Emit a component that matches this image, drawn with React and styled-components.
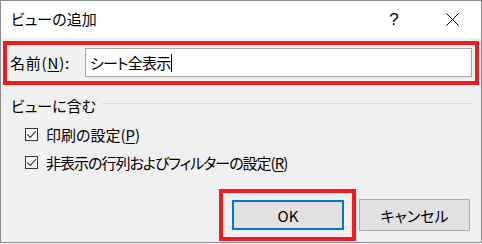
import React from "react";
import styled, { createGlobalStyle } from "styled-components";

const Global = createGlobalStyle`
  html, body {
    margin: 0;
    padding: 0;
    background: #fff;
  }
  body {
    font-family: "Noto Sans CJK JP", "Noto Sans", sans-serif;
    font-feature-settings: "palt";
    color: #000;
  }
`;

const Window = styled.div`
  box-sizing: border-box;
  width: 482px;
  height: 243px;
  border: 1px solid #8c8c8c;
  background: #f0f0f0;
  display: flex;
  flex-direction: column;
`;

const TitleBar = styled.div`
  height: 37px;
  background: #fff;
  display: flex;
  align-items: center;
  padding-left: 10px;
  font-size: 15px;
`;

const Title = styled.div`
  flex: 1;
  padding-bottom: 2px;
`;

const TitleButton = styled.div`
  width: 58px;
  height: 37px;
  display: flex;
  align-items: center;
  justify-content: center;
  font-family: "Liberation Sans", sans-serif;
  font-size: 17px;
`;

const Highlight = styled.div`
  box-sizing: border-box;
  border: 4px solid #ed1c24;
  display: flex;
  align-items: center;
`;

const NameBox = styled(Highlight)`
  margin: 3px 0 0 2px;
  width: 476px;
  height: 44px;
  padding: 0 3px 0 3px;
`;

const Label = styled.div`
  font-size: 15px;
  width: 75px;
  padding-bottom: 1px;
  white-space: nowrap;
  letter-spacing: 0.8px;
`;

const Key = styled.span`
  text-decoration: underline;
  text-underline-offset: 2px;
`;

const TextField = styled.div`
  box-sizing: border-box;
  width: 387px;
  height: 29px;
  margin-top: -1px;
  background: #fff;
  border: 1px solid #a5a5a5;
  display: flex;
  align-items: center;
  padding-left: 4px;
  font-size: 15px;
  letter-spacing: -0.8px;
`;

const Caret = styled.span`
  display: inline-block;
  width: 1px;
  height: 18px;
  background: #000;
  margin-left: 1px;
`;

const GroupHeader = styled.div`
  display: flex;
  align-items: center;
  margin: 10px 9px 0 10px;
  height: 20px;
  font-size: 15px;
`;

const GroupLine = styled.div`
  flex: 1;
  height: 1px;
  background: #dcdcdc;
  margin: 0 0 3px 6px;
`;

const CheckRow = styled.div`
  display: flex;
  align-items: center;
  height: 20px;
  margin: ${(p) => p.$top}px 0 0 24px;
  font-size: 15px;
  letter-spacing: ${(p) => p.$tight || 0}px;
`;

const Box = styled.div`
  box-sizing: border-box;
  width: 13px;
  height: 13px;
  border: 1px solid #333;
  background: #fff;
  margin-right: 8px;
  display: flex;
  align-items: center;
  justify-content: center;
`;

const ButtonRow = styled.div`
  display: flex;
  align-items: center;
  margin: 17px 11px 0 0;
  justify-content: flex-end;
  gap: 3px;
`;

const ButtonBox = styled(Highlight)`
  width: 137px;
  height: 52px;
  padding: 0 8px 0 9px;
`;

const Button = styled.div`
  box-sizing: border-box;
  width: ${(p) => p.$w}px;
  height: ${(p) => p.$h}px;
  background: #e1e1e1;
  border: ${(p) => (p.$primary ? "2px solid #0078d7" : "1px solid #adadad")};
  display: flex;
  align-items: center;
  justify-content: center;
  font-size: 15px;
`;

const Check = () => (
  <svg width="11" height="11" viewBox="0 0 11 11">
    <path d="M1.2 5.4 L4.2 8.4 L9.8 2.3" fill="none" stroke="#333" strokeWidth="1.2" />
  </svg>
);

const CloseIcon = () => (
  <svg width="13" height="13" viewBox="0 0 13 13">
    <path d="M0.5 0.5 L12.5 12.5 M12.5 0.5 L0.5 12.5" stroke="#000" strokeWidth="1" />
  </svg>
);

export default function App() {
  return (
    <>
      <Global />
      <Window>
        <TitleBar>
          <Title>ビューの追加</Title>
          <TitleButton>?</TitleButton>
          <TitleButton>
            <CloseIcon />
          </TitleButton>
        </TitleBar>
        <NameBox>
          <Label>
            名前(<Key>N</Key>):
          </Label>
          <TextField>
            シート全表示
            <Caret />
          </TextField>
        </NameBox>
        <GroupHeader>
          ビューに含む
          <GroupLine />
        </GroupHeader>
        <CheckRow $top={9}>
          <Box>
            <Check />
          </Box>
          印刷の設定(<Key>P</Key>)
        </CheckRow>
        <CheckRow $top={8} $tight={-1}>
          <Box>
            <Check />
          </Box>
          非表示の行列およびフィルターの設定(<Key>R</Key>)
        </CheckRow>
        <ButtonRow>
          <ButtonBox>
            <Button $primary $w={112} $h={30}>
              OK
            </Button>
          </ButtonBox>
          <Button $w={111} $h={32}>
            キャンセル
          </Button>
        </ButtonRow>
      </Window>
    </>
  );
}
